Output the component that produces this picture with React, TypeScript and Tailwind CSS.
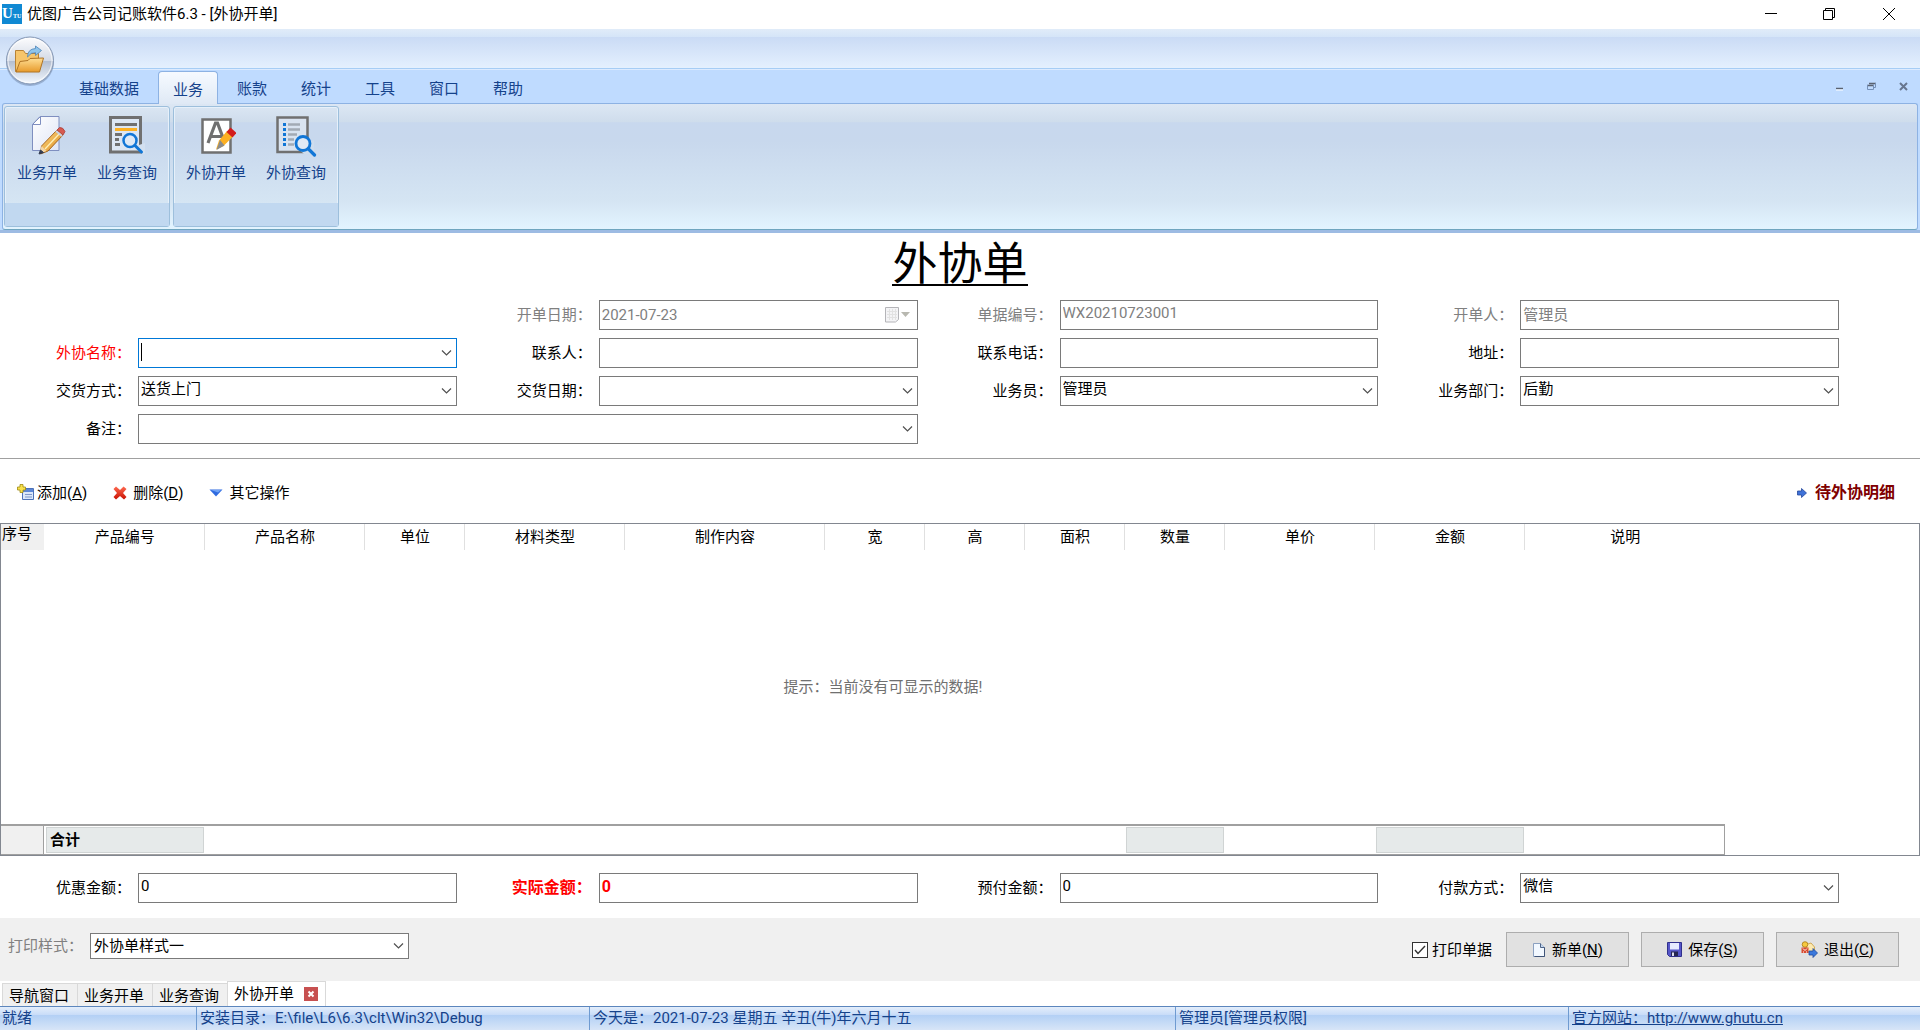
import { useState } from 'react'
import type { ReactNode } from 'react'
import clsx from 'clsx'

const ribbonTabs = ['基础数据', '业务', '账款', '统计', '工具', '窗口', '帮助']

const columns = [
  { title: '产品编号', width: 'w-40' },
  { title: '产品名称', width: 'w-40' },
  { title: '单位', width: 'w-[100px]' },
  { title: '材料类型', width: 'w-40' },
  { title: '制作内容', width: 'w-[200px]' },
  { title: '宽', width: 'w-[100px]' },
  { title: '高', width: 'w-[100px]' },
  { title: '面积', width: 'w-[100px]' },
  { title: '数量', width: 'w-[100px]', sum: true },
  { title: '单价', width: 'w-[150px]' },
  { title: '金额', width: 'w-[150px]', sum: true },
  { title: '说明', width: 'w-[200px]' },
]

/* ---------- icons ---------- */

function Magnifier({ x, y }: { x: number; y: number }) {
  return (
    <g fill="none" stroke="#1176d6" strokeLinecap="round">
      <circle cx={x} cy={y} r="6.5" strokeWidth="2.5" fill="#dfe9f5" />
      <path d={`M${x + 5} ${y + 5}l6.500 6.500`} strokeWidth="3" />
    </g>
  )
}

function BillIcon() {
  return (
    <svg width="40" height="40" viewBox="0 0 40 40">
      <defs>
        <linearGradient id="paper" x1="0" y1="0" x2="1" y2="1">
          <stop offset="0" stopColor="#fff" />
          <stop offset="1" stopColor="#dfe5f6" />
        </linearGradient>
        <linearGradient id="pencil" x1="0" y1="0" x2="1" y2="1">
          <stop offset="0" stopColor="#ffe08a" />
          <stop offset="1" stopColor="#d98114" />
        </linearGradient>
      </defs>
      <path d="M13 1.500h19v34H5.500V9.500z" fill="url(#paper)" stroke="#7f8fc0" />
      <path d="M13.500 1.500v8h-8z" fill="#fff" stroke="#7f8fc0" />
      <path d="M30 15l6 5-15 16-7.500 3 1-8z" fill="url(#pencil)" stroke="#9c5a14" strokeWidth=".9" />
      <path d="M33 18L18 34" stroke="#fff0b8" strokeWidth="1.200" />
      <path d="M30 15l2.500-2.500q3.500-.5 5.500 4L36 20z" fill="#d75a50" stroke="#a93a35" strokeWidth=".8" />
      <path d="M29 16l6 5" stroke="#c9d2e4" strokeWidth="2" />
      <path d="M14.500 31l-2 7.500 7-2.500z" fill="#f2d6a8" />
      <path d="M13.500 35l-1.500 4 4.500-1.500z" fill="#333c52" stroke="#333c52" />
    </svg>
  )
}

function QueryIcon() {
  return (
    <svg width="40" height="40" viewBox="0 0 40 40">
      <path d="M3.500 2.500h30V37h-30z" fill="#dce6f3" stroke="#707070" strokeWidth="3" />
      <path d="M8 9.500h22" stroke="#707070" strokeWidth="3" />
      <path d="M8 14.500h22" stroke="#fdb022" strokeWidth="3" />
      <path d="M8 19.500h7M8 24.500h4M8 29.500h5" stroke="#707070" strokeWidth="3" />
      <path d="M26 32l10 7h2V28z" fill="#d3e0f0" />
      <Magnifier x={23} y={25.500} />
    </svg>
  )
}

function OutBillIcon() {
  return (
    <svg width="40" height="40" viewBox="0 0 40 40">
      <path d="M6.500 4.500h28v33h-28z" fill="#fff" stroke="#707070" strokeWidth="2.500" />
      <path d="M12 28l7.500-20h2L29 28M15 21.500h11" fill="none" stroke="#707070" strokeWidth="3.200" />
      <path d="M31 16l6 5.500L27.500 31 20 34.500l3-9z" fill="#fdb022" />
      <path d="M24 25l-3.500 10 8-4.500z" fill="#8b8b8b" />
      <path d="M30.500 17l4-4.500 6 5.500-4 4.500z" fill="#d21c1c" />
    </svg>
  )
}

function OutQueryIcon() {
  return (
    <svg width="42" height="42" viewBox="0 0 42 42">
      <path d="M2.500 2.500h30V37h-30z" fill="#d9e3f0" stroke="#707070" strokeWidth="2.500" />
      <path d="M8 9.500h3M8 14.500h3M8 19.500h3M8 24.500h3M8 29.500h3" stroke="#1176d6" strokeWidth="3" />
      <path d="M13 9.500h12M13 14.500h12M13 19.500h9M13 24.500h6M13 29.500h6" stroke="#a2aab4" strokeWidth="2.500" />
      <path d="M24 34l5 5h10V25z" fill="#cfdded" />
      <g fill="none" stroke="#1176d6" strokeLinecap="round">
        <circle cx="28" cy="28.500" r="7" strokeWidth="2.800" fill="#dfe9f5" />
        <path d="M33.500 34l6 6" strokeWidth="3.200" />
      </g>
    </svg>
  )
}

function Orb() {
  return (
    <svg width="52" height="52" viewBox="0 0 52 52">
      <defs>
        <linearGradient id="orb" x1="0" y1="0" x2="0" y2="1">
          <stop offset="0" stopColor="#fdfdfe" />
          <stop offset=".5" stopColor="#d3dae6" />
          <stop offset=".52" stopColor="#b4bfd1" />
          <stop offset="1" stopColor="#f4f9ff" />
        </linearGradient>
        <linearGradient id="folder" x1="0" y1="0" x2="0" y2="1">
          <stop offset="0" stopColor="#ffdf95" />
          <stop offset="1" stopColor="#e79a2b" />
        </linearGradient>
      </defs>
      <circle cx="26" cy="27" r="24" fill="#6f86a8" opacity=".5" />
      <circle cx="26" cy="25.500" r="23.500" fill="url(#orb)" stroke="#8497b4" />
      <circle cx="26" cy="25.500" r="22" fill="none" stroke="#fff" opacity=".7" />
      <path d="M11.500 36.500V15.500h8l2 3h13v18z" fill="#f6c56b" stroke="#b98234" />
      <path d="M16 26.500l8-1 2-2 13.500-.5-4 14H12z" fill="url(#folder)" stroke="#b07424" />
      <path d="M23.500 22q0-8 8-8.500V11l6 4.500-6 5v-3q-4.500-.5-8 4.500z" fill="#8ec4ec" stroke="#4c84b8" strokeWidth=".8" />
    </svg>
  )
}

function Chevron() {
  return (
    <svg className="pointer-events-none absolute right-[5px] top-1/2 -translate-y-1/2" width="11" height="7" viewBox="0 0 11 7">
      <path d="M1 1l4.500 4.500L10 1" fill="none" stroke="#505050" strokeWidth="1.200" />
    </svg>
  )
}

function AddIcon() {
  return (
    <svg width="17" height="17" viewBox="0 0 17 17">
      <path d="M5.500 4.500h11v11h-11z" fill="#dbe7fa" stroke="#4d72b8" />
      <path d="M6 5h10v3H6z" fill="#5c86d6" />
      <path d="M8 10.500h7M8 13h7" stroke="#7f97c8" />
      <path d="M3 .5h3V3h2.500v3H6v2.500H3V6H.5V3H3z" fill="#f8e04c" stroke="#a08a10" strokeWidth=".8" />
    </svg>
  )
}

function DeleteIcon() {
  return (
    <svg width="14" height="14" viewBox="0 0 14 14">
      <defs>
        <linearGradient id="cross" x1="0" y1="0" x2="0" y2="1">
          <stop offset="0" stopColor="#ff6a50" />
          <stop offset="1" stopColor="#c80f00" />
        </linearGradient>
      </defs>
      <path d="M3 .5L7 4l3.500-3.500L13.500 3 10 7l3.500 4-2.500 2.500L7 10l-4 3.500L.5 11 4 7 .5 3z" fill="url(#cross)" />
    </svg>
  )
}

function PageIcon() {
  return (
    <svg width="14" height="16" viewBox="0 0 14 16">
      <path d="M1.500 1.500h7l4 4v9h-11z" fill="#f2f8ff" stroke="#8aa0c0" />
      <path d="M8.500 1.500v4h4" fill="#c5d8ee" stroke="#4f6488" />
      <path d="M12.500 5.500v9h-10" fill="none" stroke="#3f5478" />
    </svg>
  )
}

function DiskIcon() {
  return (
    <svg width="15" height="15" viewBox="0 0 15 15">
      <path d="M.5.5h14v14H2.500l-2-2z" fill="#5656c8" stroke="#30308c" />
      <path d="M3 1h9v6.500H3z" fill="#e6ebff" />
      <path d="M4 9.500h7V14H4z" fill="#262650" />
      <path d="M5 10.500h2V14H5z" fill="#dcdcf0" />
    </svg>
  )
}

function ExitIcon() {
  return (
    <svg width="17" height="17" viewBox="0 0 17 17">
      <path d="M5 3.500L10 2l3.500 4v5H6z" fill="#fce9b0" stroke="#c79a3a" strokeWidth=".8" />
      <circle cx="4" cy="3.500" r="2.800" fill="#f5c840" stroke="#a87810" strokeWidth=".8" />
      <path d="M.5 6.500h7V12h-7z" fill="#d84a30" />
      <path d="M2 7.500l2 2 2-2M2.500 11.500v-1M5.500 11.500v-1" fill="none" stroke="#fff" />
      <path d="M8 10h4V7.500l4.500 4.500-4.500 4.500V14H8z" fill="#3b78dc" stroke="#1e4a9c" strokeWidth=".8" />
    </svg>
  )
}

/* ---------- form parts ---------- */

type FieldProps = {
  id: string
  label: string
  value?: string
  labelClass?: string
  inputClass?: string
  disabled?: boolean
  wide?: boolean
  children?: ReactNode
}

const boxClass = 'h-[30px] w-full border border-[#7a7a7a] bg-white pl-0.5 outline-none'

function Row({ id, label, labelClass, wide, children }: FieldProps) {
  return (
    <div className={clsx('flex items-center', wide && 'col-span-2')}>
      <label htmlFor={id} className={clsx('w-[138px] shrink-0 pr-[7px] text-right', labelClass)}>
        {label}
      </label>
      <div className="relative flex-1">{children}</div>
    </div>
  )
}

function TextField(props: FieldProps) {
  return (
    <Row {...props} labelClass={clsx(props.labelClass, props.disabled && 'text-[#808080]')}>
      <input
        id={props.id}
        type="text"
        disabled={props.disabled}
        defaultValue={props.value}
        className={clsx(boxClass, props.disabled && 'text-[#808080]', props.inputClass ?? 'pb-1')}
      />
      {props.children}
    </Row>
  )
}

function SelectField(props: FieldProps) {
  return (
    <Row {...props}>
      <select id={props.id} className={clsx(boxClass, 'block appearance-none pb-1')}>
        <option>{props.value}</option>
      </select>
      <Chevron />
    </Row>
  )
}

function RibbonButton({ icon, text }: { icon: ReactNode; text: string }) {
  return (
    <button type="button" className="flex w-20 flex-col items-center pt-2">
      <span className="flex h-12 items-start">{icon}</span>
      <span>{text}</span>
    </button>
  )
}

function RibbonGroup({ children }: { children: ReactNode }) {
  return (
    <div className="flex flex-col rounded-[3px] border border-[#9dbfdc] shadow-[inset_0_0_0_1px_#e6f0fa]">
      <div className="flex flex-1 px-0.5">{children}</div>
      <div className="h-[23px] bg-[#c1d8f0]" />
    </div>
  )
}

function ActionButton({ icon, text, hotkey }: { icon: ReactNode; text: string; hotkey: string }) {
  return (
    <button type="button" className="flex h-[35px] w-[123px] items-center justify-center gap-1.5 border border-[#adadad] bg-[#e1e1e1]">
      {icon}
      <span>{text}(<u>{hotkey}</u>)</span>
    </button>
  )
}

export default function App() {
  const [tab, setTab] = useState('业务')
  const [print, setPrint] = useState(true)

  return (
    <div className="flex min-h-screen flex-col bg-white font-['Roboto','Noto_Sans_CJK_SC',sans-serif] text-[15px] leading-5 text-black">
      {/* Title bar */}
      <header className="flex h-[29px] items-center pb-0.5 pl-0.5">
        <svg width="20" height="20" viewBox="0 0 20 20">
          <rect width="20" height="20" fill="#1089d3" />
          <text x="0" y="14" fontSize="15" fontWeight="bold" fill="#fff" fontFamily="Liberation Serif">U</text>
          <text x="11" y="14" fontSize="6" fontWeight="bold" fill="#fff" fontFamily="Liberation Serif">TU</text>
        </svg>
        <h1 className="ml-[5px]">优图广告公司记账软件6.3 - [外协开单]</h1>
        <div className="ml-auto flex">
          <button type="button" aria-label="最小化" className="flex w-[58px] justify-center">
            <svg width="12" height="12" viewBox="0 0 12 12"><path d="M0 5.500h12" stroke="#000" /></svg>
          </button>
          <button type="button" aria-label="还原" className="flex w-[58px] justify-center">
            <svg width="12" height="12" viewBox="0 0 12 12"><path d="M.5 2.500h9v9h-9zM2.500 2.500v-2h9v9h-2" fill="none" stroke="#000" /></svg>
          </button>
          <button type="button" aria-label="关闭" className="flex w-[62px] justify-center">
            <svg width="12" height="12" viewBox="0 0 12 12"><path d="M0 0l12 12M12 0L0 12" stroke="#000" /></svg>
          </button>
        </div>
      </header>

      {/* Ribbon */}
      <div className="relative bg-[#bfdbff] text-[#15428b]">
        <div className="h-2 bg-gradient-to-b from-[#e1ecf9] to-[#d5e5f8]" />
        <div className="h-8 border-b border-[#a6cdf5] bg-gradient-to-b from-[#cadbf5] to-[#e4f0fe]" />
        <button type="button" aria-label="打开" className="absolute left-1 top-1.5">
          <Orb />
        </button>
        <div className="flex h-[34px] items-end border-t border-[#dcebff] pl-[62px]">
          {ribbonTabs.map((name) => (
            <button
              key={name}
              type="button"
              onClick={() => setTab(name)}
              className={clsx(
                'pt-1',
                name === tab
                  ? 'relative z-10 -mb-px mx-0.5 h-[33px] rounded-t-[4px] border border-b-0 border-[#8db2e3] bg-gradient-to-b from-[#f6faff] to-[#dfe9f5] px-3.5'
                  : 'h-8 px-[17px]',
              )}
            >
              {name}
            </button>
          ))}
          <div className="mb-3 ml-auto flex items-center gap-[23px] pr-3">
            <button type="button" aria-label="最小化窗口">
              <svg width="9" height="9" viewBox="0 0 9 9"><path d="M1 6.500h7" stroke="#5a6270" strokeWidth="1.500" /><path d="M1 8h7" stroke="#fff" /></svg>
            </button>
            <button type="button" aria-label="还原窗口">
              <svg width="9" height="9" viewBox="0 0 9 9"><path d="M2 1.500h7M0 3.500h7" stroke="#5a6270" strokeWidth="1.500" /><path d="M.5 3v4.500h6V3M8.500 1v4.500h-2" fill="none" stroke="#7590b8" /></svg>
            </button>
            <button type="button" aria-label="关闭窗口">
              <svg width="9" height="9" viewBox="0 0 9 9"><path d="M1 1l7 7M8 1L1 8" stroke="#67768e" strokeWidth="2" /></svg>
            </button>
          </div>
        </div>
        <div className="border-b-[3px] border-[#9dbbe3] px-0.5">
          <div className="flex h-[127px] gap-[3px] rounded-[3px] border border-[#8db2e3] border-b-[#6fa5bf] bg-[linear-gradient(#dce7f4_0%,#cfddec_14%,#c8d8ee_15%,#c8d8ed_30%,#d5e5f3_78%,#e3f4ff_100%)] px-px py-0.5">
            <RibbonGroup>
              <RibbonButton icon={<BillIcon />} text="业务开单" />
              <RibbonButton icon={<QueryIcon />} text="业务查询" />
            </RibbonGroup>
            <RibbonGroup>
              <RibbonButton icon={<OutBillIcon />} text="外协开单" />
              <RibbonButton icon={<OutQueryIcon />} text="外协查询" />
            </RibbonGroup>
          </div>
        </div>
      </div>

      {/* Order form */}
      <form className="flex flex-1 flex-col">
        <h2 className="mx-auto mt-[7px] h-[46px] border-b-2 border-black font-['Noto_Sans_CJK_SC',sans-serif] text-[45px] leading-[42px]">外协单</h2>

        <div className="mt-3.5 grid grid-cols-4 gap-x-1 gap-y-2 pr-[81px]">
          <div className="col-start-2">
            <TextField id="date" label="开单日期：" value="2021-07-23" disabled inputClass="pb-0">
              <svg className="absolute right-[7px] top-[7px]" width="26" height="16" viewBox="0 0 26 16">
                <path d="M.5.5h13v12l-3 2.500H.5z" fill="#f4f4f6" stroke="#b4b4b8" />
                <path d="M2 4.500h10M2 7.500h10M2 10.500h10M4.500 2v11M7.500 2v11M10.500 2v11" stroke="#e2e2e2" />
                <path d="M16 5h9l-4.500 5z" fill="#b8b8b0" />
              </svg>
            </TextField>
          </div>
          <TextField id="billNo" label="单据编号：" value="WX20210723001" disabled />
          <TextField id="creator" label="开单人：" value="管理员" disabled />

          <TextField id="vendor" label="外协名称：" labelClass="text-[#ff0000]" inputClass="border-[#0078d7]">
            <span className="absolute left-[3px] top-[5px] h-[18px] w-px bg-black" />
            <Chevron />
          </TextField>
          <TextField id="contact" label="联系人：" />
          <TextField id="phone" label="联系电话：" />
          <TextField id="address" label="地址：" />

          <SelectField id="delivery" label="交货方式：" value="送货上门" />
          <SelectField id="deliveryDate" label="交货日期：" />
          <SelectField id="salesman" label="业务员：" value="管理员" />
          <SelectField id="department" label="业务部门：" value="后勤" />

          <SelectField id="remark" label="备注：" wide />
        </div>

        {/* Grid toolbar */}
        <div className="mt-3.5 flex h-[65px] items-center border-t border-[#a0a0a0] pl-[17px] pr-[25px] pt-[3px]">
          <button type="button" className="flex items-center gap-[3px]">
            <AddIcon />
            <span>添加(<u>A</u>)</span>
          </button>
          <button type="button" className="ml-[26px] flex items-center gap-1.5">
            <DeleteIcon />
            <span>删除(<u>D</u>)</span>
          </button>
          <button type="button" className="ml-[26px] flex items-center gap-1.5">
            <svg width="14" height="8" viewBox="0 0 14 8">
              <path d="M.5.5h13L7 7.500z" fill="#2f6be0" />
              <path d="M2 1h10L9 3.500z" fill="#6fa2f5" />
            </svg>
            其它操作
          </button>
          <button type="button" className="ml-auto flex items-center gap-2 text-base font-bold text-[#800000]">
            <svg width="10" height="10" viewBox="0 0 10 10">
              <path d="M.5 3h4V.5L9.500 5l-5 4.500V7h-4z" fill="#3f72d8" stroke="#24489c" strokeWidth=".8" />
            </svg>
            待外协明细
          </button>
        </div>

        {/* Detail grid */}
        <div className="flex flex-1 flex-col border border-[#828790]">
          <table className="w-[1723px] table-fixed border-collapse">
            <thead>
              <tr className="h-[26px]">
                <th className="w-[43px] bg-[#f0f0f0] p-0 pb-1.5 pl-px text-left font-normal">序号</th>
                {columns.map((col) => (
                  <th key={col.title} className={clsx('border-r border-[#e0e0e0] p-0 pl-0.5 font-normal last:border-r-0', col.width)}>
                    {col.title}
                  </th>
                ))}
              </tr>
            </thead>
          </table>
          <div className="flex w-[1764px] flex-1 items-center justify-center text-[#707070]">提示：当前没有可显示的数据!</div>
          <table className="w-[1723px] table-fixed border-separate border-spacing-0 border-b border-r border-t-2 border-[#a0a0a0]">
            <tbody>
              <tr className="h-7">
                <td className="w-[43px] border-r border-[#a0a0a0] bg-[#f0f0f0] p-0" />
                {columns.map((col, i) => (
                  <td key={col.title} className={clsx('py-px pl-0.5 pr-0', col.width)}>
                    {(i === 0 || col.sum) && (
                      <div className="h-[26px] border border-[#d0d4d4] bg-[#e6eaea] pl-[3px] pt-0.5 font-bold">{i === 0 && '合计'}</div>
                    )}
                  </td>
                ))}
              </tr>
            </tbody>
          </table>
        </div>

        {/* Amounts */}
        <div className="grid grid-cols-4 gap-x-1 pb-[15px] pr-[81px] pt-[17px]">
          <TextField id="discount" label="优惠金额：" value="0" />
          <TextField
            id="actual"
            label="实际金额："
            value="0"
            labelClass="text-base leading-5 font-bold text-[#ff0000]"
            inputClass="pb-1 text-base font-bold text-[#ff0000]"
          />
          <TextField id="prepaid" label="预付金额：" value="0" />
          <SelectField id="payment" label="付款方式：" value="微信" />
        </div>

        {/* Print and actions */}
        <div className="flex h-[63px] items-center bg-[#f0f0f0] pl-2 pr-[21px]">
          <div className="mb-2 flex items-center">
            <label htmlFor="style" className="w-[82px] text-[#808080]">打印样式：</label>
            <div className="relative w-[319px]">
              <select id="style" className="block h-[26px] w-full appearance-none border border-[#7a7a7a] bg-white pl-[3px]">
                <option>外协单样式一</option>
              </select>
              <Chevron />
            </div>
          </div>
          <label className="relative ml-auto mr-3.5 flex items-center gap-1">
            <input
              type="checkbox"
              checked={print}
              onChange={(e) => setPrint(e.target.checked)}
              className="size-4 appearance-none border border-[#333] bg-white"
            />
            {print && (
              <svg className="pointer-events-none absolute left-0.5" width="12" height="12" viewBox="0 0 12 12">
                <path d="M1 6l3 3.500L11 2" fill="none" stroke="#333" strokeWidth="1.400" />
              </svg>
            )}
            打印单据
          </label>
          <div className="flex gap-3">
            <ActionButton icon={<PageIcon />} text="新单" hotkey="N" />
            <ActionButton icon={<DiskIcon />} text="保存" hotkey="S" />
            <ActionButton icon={<ExitIcon />} text="退出" hotkey="C" />
          </div>
        </div>
      </form>

      {/* Open windows */}
      <nav className="flex h-[25px] items-end pl-0.5">
        {['导航窗口', '业务开单', '业务查询'].map((name) => (
          <button key={name} type="button" className="h-[23px] w-[75px] border border-b-0 border-r-0 border-[#d9d9d9] bg-[#f0f0f0] pr-0.5 pt-0.5">
            {name}
          </button>
        ))}
        <div className="flex h-[25px] w-[99px] items-center gap-2.5 border border-b-0 border-[#d9d9d9] bg-white pl-1.5">
          外协开单
          <button type="button" aria-label="关闭标签">
            <svg width="14" height="14" viewBox="0 0 14 14">
              <rect width="14" height="14" fill="#c75050" />
              <path d="M4.500 4.500l5 5M9.500 4.500l-5 5" stroke="#fff" strokeWidth="2" />
            </svg>
          </button>
        </div>
      </nav>

      {/* Status bar */}
      <footer className="flex h-6 border-t border-[#5c86bd] bg-[linear-gradient(#e4eefb_0%,#c8dcf8_34%,#b3d0f5_36%,#d7e5f7_100%)] text-[#15428b]">
        <span className="w-[197px] border-r border-[#6f9bd1] pl-0.5 pt-px">就绪</span>
        <span className="w-[393px] border-r border-[#6f9bd1] pl-[3px] pt-px">安装目录：E:\file\L6\6.3\clt\Win32\Debug</span>
        <span className="w-[586px] border-r border-[#6f9bd1] pl-[3px] pt-px">今天是：2021-07-23 星期五 辛丑(牛)年六月十五</span>
        <span className="w-[393px] border-r border-[#6f9bd1] pl-[3px] pt-px">管理员[管理员权限]</span>
        <a href="http://www.ghutu.cn" className="pl-[3px] pt-px underline">官方网站：http://www.ghutu.cn</a>
      </footer>
    </div>
  )
}
